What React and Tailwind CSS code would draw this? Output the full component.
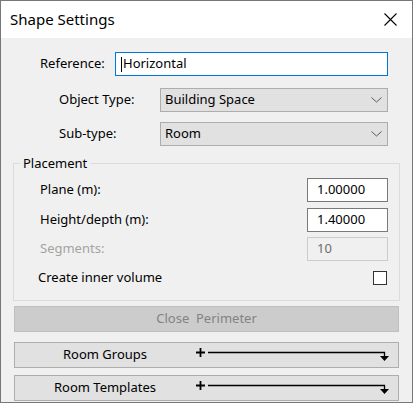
import React from 'react';

const font = { fontFamily: '"Noto Sans", "Liberation Sans", sans-serif' };

const Chevron = () => (
  <svg width="11" height="6" viewBox="0 0 11 6" className="mr-[5px]">
    <path d="M0.5 0.5 L5.5 5 L10.5 0.5" fill="none" stroke="#5a5a5a" strokeWidth="1" />
  </svg>
);

const Select = ({ value }) => (
  <div className="flex h-[24px] w-[228px] items-center justify-between border border-[#adadad] bg-[#e1e1e1] pl-[4px]">
    <span>{value}</span>
    <Chevron />
  </div>
);

const NumberBox = ({ value, disabled }) => (
  <div
    className={`flex h-[24px] w-[81px] items-center pl-[9px] ${
      disabled ? 'border border-[#cccccc] bg-[#f0f0f0] text-[#6d6d6d]' : 'border border-[#7a7a7a] bg-white'
    }`}
  >
    {value}
  </div>
);

const ArrowLine = () => (
  <svg width="196" height="16" viewBox="0 0 196 16">
    <path d="M1 5.5 H10 M5.5 1 V10" stroke="#000" strokeWidth="1.8" />
    <path d="M13 5.5 H189.5 V9" fill="none" stroke="#000" strokeWidth="1.3" />
    <path d="M185 9 H194 L189.5 14 Z" fill="#000" />
  </svg>
);

const GroupButton = ({ label, className }) => (
  <div className={`ml-[13px] flex h-[26px] w-[385px] items-center border border-[#adadad] bg-[#e1e1e1] ${className}`}>
    <span className="w-[180px] text-center">{label}</span>
    <ArrowLine />
  </div>
);

export default function App() {
  return (
    <div
      className="flex h-[403px] w-[413px] flex-col overflow-hidden border border-[#777777] bg-[#f0f0f0] text-[13px] text-black"
      style={font}
    >
      {/* title bar */}
      <div className="flex h-[37px] shrink-0 items-center justify-between bg-white pl-[9px] pr-[15px]">
        <span className="text-[15px]">Shape Settings</span>
        <svg width="13" height="13" viewBox="0 0 13 13">
          <path d="M0.5 0.5 L12.5 12.5 M12.5 0.5 L0.5 12.5" stroke="#000" strokeWidth="1.1" />
        </svg>
      </div>

      <div className="flex flex-col">
        <div className="mt-[14px] flex h-[24px] items-center">
          <span className="ml-[39px] w-[75px]">Reference:</span>
          <div className="flex h-[24px] w-[273px] items-center border border-[#0078d7] bg-white pl-[5px]">
            <span className="mr-[1px] h-[15px] w-[1px] bg-black" />
            Horizontal
          </div>
        </div>

        <div className="mt-[12px] flex items-center">
          <span className="ml-[58px] w-[101px]">Object Type:</span>
          <Select value="Building Space" />
        </div>

        <div className="mt-[10px] flex items-center">
          <span className="ml-[58px] w-[101px]">Sub-type:</span>
          <Select value="Room" />
        </div>

        <fieldset className="ml-[12px] mt-[8px] w-[387px] border border-[#dcdcdc] pb-[15px] pl-[26px] pr-[11px]">
          <legend className="-ml-[20px] px-[3px] leading-[18px]">Placement</legend>
          <div className="mt-[6px] flex items-center justify-between">
            <span>Plane (m):</span>
            <NumberBox value="1.00000" />
          </div>
          <div className="mt-[6px] flex items-center justify-between">
            <span>Height/depth (m):</span>
            <NumberBox value="1.40000" />
          </div>
          <div className="mt-[5px] flex items-center justify-between">
            <span className="text-[#a3a3a3]">Segments:</span>
            <NumberBox value="10" disabled />
          </div>
          <div className="mt-[10px] flex h-[14px] items-center justify-between">
            <span className="-ml-[2px]">Create inner volume</span>
            <span className="mr-[1px] h-[14px] w-[14px] border border-[#333333] bg-white" />
          </div>
        </fieldset>

        <div className="ml-[13px] mt-[5px] flex h-[26px] w-[385px] items-center justify-center border border-[#bfbfbf] bg-[#cccccc] whitespace-pre text-[#838383]">
          {'Close  Perimeter'}
        </div>

        <GroupButton label="Room Groups" className="mt-[10px]" />
        <GroupButton label="Room Templates" className="mt-[7px]" />
      </div>
    </div>
  );
}
